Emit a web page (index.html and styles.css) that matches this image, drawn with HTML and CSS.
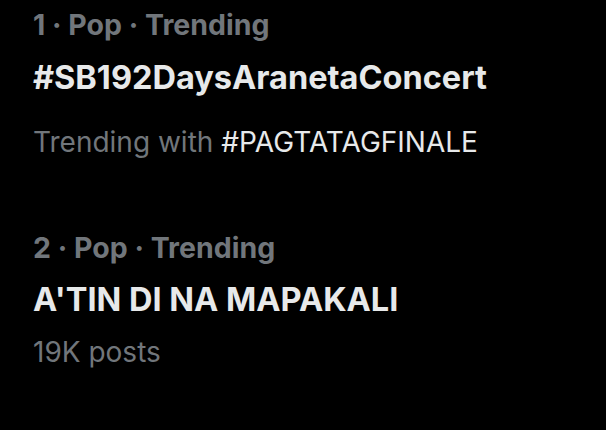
FILE: index.html
```html
<!DOCTYPE html>
<html>
<head>
<meta charset="utf-8">
<link rel="stylesheet" href="styles.css">
</head>
<body>
<div class="list">
  <div class="trend first">
    <div class="meta">1 · Pop · Trending</div>
    <div class="title">#SB192DaysAranetaConcert</div>
    <div class="sub with">Trending with <span class="tag">#PAGTATAGFINALE</span></div>
  </div>
  <div class="trend second">
    <div class="meta">2 · Pop · Trending</div>
    <div class="title">A'TIN DI NA MAPAKALI</div>
    <div class="sub">19K posts</div>
  </div>
</div>
</body>
</html>
```
FILE: styles.css
```css
html, body {
  margin: 0;
  padding: 0;
  background: #000;
  width: 606px;
  height: 430px;
  overflow: hidden;
}
body {
  font-family: Inter, "Noto Sans", sans-serif;
}
.list {
  padding: 5px 0 0 33px;
}
.meta {
  color: #71767b;
  font-weight: 700;
  font-size: 28.5px;
  line-height: 40px;
  letter-spacing: 0;
}
.title {
  color: #e7e9ea;
  font-weight: 700;
  font-size: 32.5px;
  line-height: 42px;
  margin-top: 12px;
  letter-spacing: 0;
}
.sub {
  color: #71767b;
  font-size: 28px;
  line-height: 40px;
}
.with {
  margin-top: 23px;
}
.tag {
  color: #e7e9ea;
}
.second {
  margin-top: 66px;
}
.second .title {
  margin-top: 11px;
}
.second .sub {
  margin-top: 11px;
}
```
